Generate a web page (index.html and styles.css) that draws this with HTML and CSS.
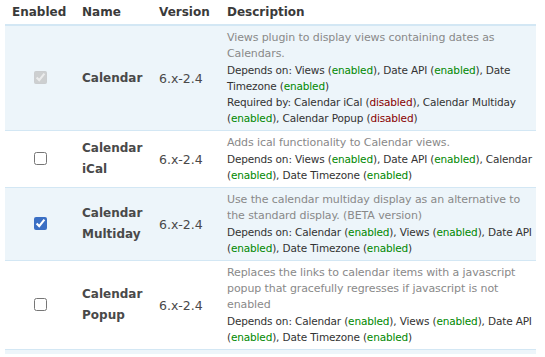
FILE: index.html
```html
<!DOCTYPE html>
<html lang="en">
<head>
    <meta charset="UTF-8">
    <title>Modules</title>
    <link rel="stylesheet" href="styles.css">
</head>
<body>
    <table class="modules">
        <thead>
            <tr>
                <th class="col-enabled">Enabled</th>
                <th class="col-name">Name</th>
                <th class="col-version">Version</th>
                <th>Description</th>
            </tr>
        </thead>
        <tbody>
            <tr class="odd">
                <td class="checkbox"><input type="checkbox" checked disabled></td>
                <td class="name">Calendar</td>
                <td class="version">6.x-2.4</td>
                <td class="description">
                    <div class="text">Views plugin to display views containing dates as Calendars.</div>
                    <div class="deps">Depends on: Views (<span class="on">enabled</span>), Date API (<span class="on">enabled</span>), Date Timezone (<span class="on">enabled</span>)</div>
                    <div class="deps">Required by: Calendar iCal (<span class="off">disabled</span>), Calendar Multiday (<span class="on">enabled</span>), Calendar Popup (<span class="off">disabled</span>)</div>
                </td>
            </tr>
            <tr class="even">
                <td class="checkbox"><input type="checkbox"></td>
                <td class="name">Calendar iCal</td>
                <td class="version">6.x-2.4</td>
                <td class="description">
                    <div class="text">Adds ical functionality to Calendar views.</div>
                    <div class="deps">Depends on: Views (<span class="on">enabled</span>), Date API (<span class="on">enabled</span>), Calendar (<span class="on">enabled</span>), Date Timezone (<span class="on">enabled</span>)</div>
                </td>
            </tr>
            <tr class="odd">
                <td class="checkbox"><input type="checkbox" checked></td>
                <td class="name">Calendar Multiday</td>
                <td class="version">6.x-2.4</td>
                <td class="description">
                    <div class="text">Use the calendar multiday display as an alternative to the standard display. (BETA version)</div>
                    <div class="deps">Depends on: Calendar (<span class="on">enabled</span>), Views (<span class="on">enabled</span>), Date API (<span class="on">enabled</span>), Date Timezone (<span class="on">enabled</span>)</div>
                </td>
            </tr>
            <tr class="even">
                <td class="checkbox"><input type="checkbox"></td>
                <td class="name">Calendar Popup</td>
                <td class="version">6.x-2.4</td>
                <td class="description">
                    <div class="text">Replaces the links to calendar items with a javascript popup that gracefully regresses if javascript is not enabled</div>
                    <div class="deps">Depends on: Calendar (<span class="on">enabled</span>), Views (<span class="on">enabled</span>), Date API (<span class="on">enabled</span>), Date Timezone (<span class="on">enabled</span>)</div>
                </td>
            </tr>
            <tr class="odd filler">
                <td colspan="4"></td>
            </tr>
        </tbody>
    </table>
</body>
</html>
```
FILE: styles.css
```css
body {
    margin: 0;
    padding: 0 0 0 5px;
    font-family: "DejaVu Sans", Verdana, sans-serif;
    color: #494949;
    background: #fff;
}
.modules {
    width: 531px;
    border-collapse: collapse;
    table-layout: fixed;
}
.modules th {
    text-align: left;
    font-size: 12px;
    font-weight: bold;
    height: 24px;
    padding: 0 7px;
    vertical-align: middle;
    border-bottom: 2px solid #d3e7f4;
    color: #3a3a3a;
}
.col-enabled {
    width: 56px;
}
.col-name {
    width: 63px;
}
.col-version {
    width: 54px;
}
.modules td {
    padding: 4px 7px;
    vertical-align: middle;
    border-bottom: 1px solid #d3e7f4;
}
.odd {
    background: #edf5fa;
}
.even {
    background: #fff;
}
.checkbox {
    text-align: center;
}
.checkbox input {
    margin: 0;
    width: 13px;
    height: 13px;
    accent-color: #3b6fc4;
}
.name {
    font-size: 12px;
    font-weight: bold;
    line-height: 21px;
}
.version {
    font-size: 12.5px;
}
.modules td.description {
    font-size: 11px;
    line-height: 16px;
    padding-right: 3px;
}
.description .text {
    color: #898989;
    letter-spacing: -0.1px;
}
.description .deps {
    color: #333;
    font-size: 10.5px;
    letter-spacing: -0.15px;
}
.on {
    color: #080;
}
.off {
    color: #800;
}
.filler td {
    height: 4px;
    padding: 0;
    border: none;
}
```
